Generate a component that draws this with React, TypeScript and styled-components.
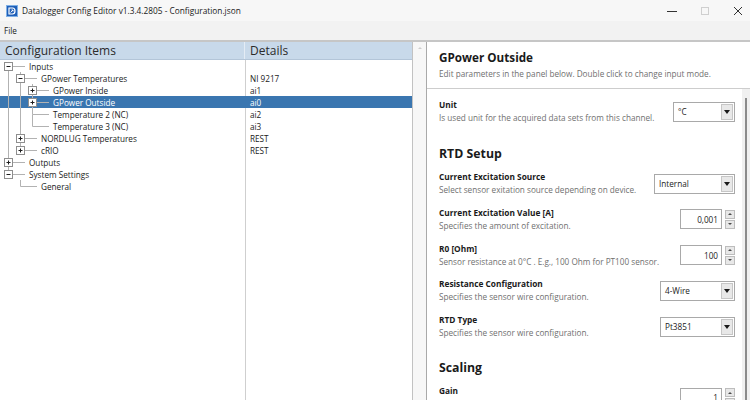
import React from "react";
import styled, { createGlobalStyle } from "styled-components";

const GlobalStyle = createGlobalStyle`
  html, body { margin: 0; padding: 0; width: 750px; height: 400px; overflow: hidden; background: #ffffff; }
  body { font-family: "Open Sans", "Noto Sans", sans-serif; font-size: 8.2px; color: #1b1b1b; }
  #root { width: 750px; height: 400px; }
`;

const Window = styled.div`
  width: 750px;
  height: 400px;
  display: flex;
  flex-direction: column;
  background: #f3f3f3;
  overflow: hidden;
`;

const TitleBar = styled.div`
  height: 21px;
  display: flex;
  align-items: center;
  padding-left: 6px;
  background: #f7f7f7;
`;

const TitleText = styled.span`
  font-size: 8.3px;
  color: #1a1a1a;
  margin-left: 4px;
`;

const WindowControls = styled.div`
  margin-left: auto;
  display: flex;
  gap: 9px;
  height: 100%;
`;

const ControlButton = styled.div`
  width: 24px;
  height: 100%;
  display: flex;
  align-items: center;
  justify-content: center;
`;

const MenuBar = styled.div`
  height: 19px;
  display: flex;
  align-items: center;
  padding-left: 4px;
  background: #f2f2f2;
`;

const MenuItem = styled.span`
  font-size: 8.2px;
  color: #1a1a1a;
`;

const Separator = styled.div`
  height: 2px;
  background: #c6c6c6;
`;

const Main = styled.div`
  flex: 1;
  display: flex;
  background: #ffffff;
  min-height: 0;
`;

const LeftPane = styled.div`
  width: 413px;
  box-sizing: border-box;
  border-right: 1px solid #c2c2c2;
  display: flex;
  flex-direction: column;
`;

const ListHeader = styled.div`
  height: 18px;
  box-sizing: border-box;
  display: flex;
  background: #c8d9ea;
  border-bottom: 1px solid #b3c5d8;
`;

const HeaderCell = styled.div<{ $width?: number }>`
  ${(p) => (p.$width ? `width: ${p.$width}px;` : "flex: 1;")}
  box-sizing: border-box;
  display: flex;
  align-items: center;
  padding-left: 5px;
  font-size: 12px;
  color: #2b2b2b;
  ${(p) => (p.$width ? "border-right: 1px solid #e4ecf5;" : "")}
`;

const TreeBody = styled.div`
  flex: 1;
  background: linear-gradient(
    to right,
    transparent 245px,
    #cfcfcf 245px,
    #cfcfcf 246px,
    transparent 246px
  );
`;

const TreeRow = styled.div<{ $selected?: boolean }>`
  height: 12px;
  display: flex;
  align-items: center;
  background: ${(p) => (p.$selected ? "#3a76b0" : "transparent")};
  color: ${(p) => (p.$selected ? "#ffffff" : "#1b1b1b")};
`;

const NameCell = styled.div`
  width: 245px;
  height: 100%;
  display: flex;
  align-items: center;
  white-space: nowrap;
`;

const NameLabel = styled.span`
  margin-left: 3px;
  font-size: 8.2px;
`;

const DetailCell = styled.div`
  flex: 1;
  padding-left: 5px;
  font-size: 8.2px;
  white-space: nowrap;
`;

const Gutter = styled.div`
  width: 13px;
  background: #f7f7f7;
  display: flex;
  justify-content: center;
  padding-top: 5px;
  box-sizing: border-box;
`;

const GutterCaret = styled.div`
  width: 0;
  height: 0;
  border-left: 2px solid transparent;
  border-right: 2px solid transparent;
  border-bottom: 2px solid #cdcdcd;
`;

const RightPane = styled.div`
  flex: 1;
  display: flex;
  flex-direction: column;
  border-left: 1px solid #a9a9a9;
  min-width: 0;
`;

const PanelHeader = styled.div`
  padding: 7px 12px 8px 12px;
  border-bottom: 1px solid #cdcdcd;
  background: #ffffff;
`;

const PanelTitle = styled.div`
  font-size: 11.7px;
  font-weight: 700;
  line-height: 16px;
  color: #1a1a1a;
`;

const PanelSubtitle = styled.div`
  margin-top: 3px;
  line-height: 12px;
  font-size: 8.2px;
  color: #6f6f6f;
  white-space: nowrap;
`;

const ContentArea = styled.div`
  flex: 1;
  display: flex;
  min-height: 0;
  overflow: hidden;
`;

const Form = styled.div`
  flex: 1;
  padding: 10px 7px 0 12px;
  overflow: hidden;
`;

const ScrollTrack = styled.div`
  width: 8px;
  background: #f0f0f0;
  display: flex;
  flex-direction: column;
  align-items: center;
  padding-top: 9px;
`;

const ScrollThumb = styled.div`
  width: 2px;
  flex: 1;
  background: #8b8b8b;
`;

const Section = styled.div<{ $gap: number }>`
  margin-top: ${(p) => p.$gap}px;
`;

const SectionHeading = styled.div`
  font-size: 12.3px;
  font-weight: 700;
  line-height: 18px;
  color: #1a1a1a;
  margin-bottom: 8px;
`;

const FieldRow = styled.div`
  height: 25px;
  display: flex;
  align-items: center;
  justify-content: space-between;
  & + & {
    margin-top: 10.75px;
  }
`;

const FieldText = styled.div`
  display: flex;
  flex-direction: column;
  white-space: nowrap;
`;

const FieldLabel = styled.div`
  font-size: 8.3px;
  font-weight: 700;
  line-height: 12px;
  color: #1a1a1a;
`;

const FieldDesc = styled.div`
  font-size: 8.2px;
  line-height: 12px;
  height: 12px;
  margin-top: 1px;
  color: #707070;
`;

const ComboBox = styled.div<{ $width: number }>`
  width: ${(p) => p.$width}px;
  height: 20px;
  box-sizing: border-box;
  border: 1px solid #a9a9a9;
  background: #ffffff;
  display: flex;
  align-items: stretch;
`;

const ComboValue = styled.div`
  flex: 1;
  display: flex;
  align-items: center;
  padding-left: 4px;
  font-size: 8.2px;
  color: #1b1b1b;
`;

const ComboButton = styled.div`
  width: 12px;
  margin: 1px;
  box-sizing: border-box;
  border: 1px solid #c6c6c6;
  background: #e8e8e8;
  display: flex;
  align-items: center;
  justify-content: center;
`;

const DownTriangle = styled.div`
  width: 0;
  height: 0;
  border-left: 3.5px solid transparent;
  border-right: 3.5px solid transparent;
  border-top: 4px solid #1a1a1a;
`;

const NumericGroup = styled.div`
  display: flex;
  align-items: center;
  gap: 3px;
`;

const NumericBox = styled.div`
  width: 42px;
  height: 20px;
  box-sizing: border-box;
  border: 1px solid #a9a9a9;
  background: #ffffff;
  display: flex;
  align-items: center;
  justify-content: flex-end;
  padding-right: 3px;
  font-size: 8.2px;
  color: #1b1b1b;
`;

const SpinColumn = styled.div`
  display: flex;
  flex-direction: column;
  gap: 1px;
`;

const SpinButton = styled.div`
  width: 10px;
  height: 9px;
  box-sizing: border-box;
  border: 1px solid #bdbdbd;
  background: #e8e8e8;
  display: flex;
  align-items: center;
  justify-content: center;
`;

const SpinArrow = styled.div<{ $up?: boolean }>`
  width: 0;
  height: 0;
  border-left: 2.5px solid transparent;
  border-right: 2.5px solid transparent;
  ${(p) =>
    p.$up
      ? "border-bottom: 2.5px solid #4a4a4a;"
      : "border-top: 2.5px solid #4a4a4a;"}
`;

type TreeItem = {
  label: string;
  level: number;
  expander: "plus" | "minus" | null;
  detail?: string;
  guides: boolean[];
  first?: boolean;
  last?: boolean;
  selected?: boolean;
};

const treeItems: TreeItem[] = [
  { label: "Inputs", level: 0, expander: "minus", guides: [], first: true },
  { label: "GPower Temperatures", level: 1, expander: "minus", detail: "NI 9217", guides: [true] },
  { label: "GPower Inside", level: 2, expander: "plus", detail: "ai1", guides: [true, true] },
  { label: "GPower Outside", level: 2, expander: "plus", detail: "ai0", guides: [true, true], selected: true },
  { label: "Temperature 2 (NC)", level: 2, expander: null, detail: "ai2", guides: [true, true] },
  { label: "Temperature 3 (NC)", level: 2, expander: null, detail: "ai3", guides: [true, true], last: true },
  { label: "NORDLUG Temperatures", level: 1, expander: "plus", detail: "REST", guides: [true] },
  { label: "cRIO", level: 1, expander: "plus", detail: "REST", guides: [true], last: true },
  { label: "Outputs", level: 0, expander: "plus", guides: [] },
  { label: "System Settings", level: 0, expander: "minus", guides: [], last: true },
  { label: "General", level: 1, expander: null, guides: [false], last: true },
];

const LINE = "#b2b2b2";

function TreeGlyph({ item }: { item: TreeItem }) {
  const w = 26 + 12 * item.level;
  const cx = 8.5 + 12 * item.level;
  return (
    <svg width={w} height={12} viewBox={`0 0 ${w} 12`} style={{ flex: "none" }}>
      {item.guides.map((g, i) =>
        g ? <line key={i} x1={8.5 + 12 * i} y1={0} x2={8.5 + 12 * i} y2={12} stroke={LINE} strokeWidth={1} /> : null
      )}
      {!item.first && <line x1={cx} y1={0} x2={cx} y2={6.5} stroke={LINE} strokeWidth={1} />}
      {!item.last && <line x1={cx} y1={6.5} x2={cx} y2={12} stroke={LINE} strokeWidth={1} />}
      <line x1={cx} y1={6.5} x2={w - 1} y2={6.5} stroke={LINE} strokeWidth={1} />
      {item.expander && (
        <g>
          <rect x={cx - 4} y={2.5} width={8} height={8} fill="#ffffff" stroke="#8e8e8e" strokeWidth={1} />
          <line x1={cx - 2} y1={6.5} x2={cx + 2} y2={6.5} stroke="#1e1e1e" strokeWidth={1} />
          {item.expander === "plus" && (
            <line x1={cx} y1={4.5} x2={cx} y2={8.5} stroke="#1e1e1e" strokeWidth={1} />
          )}
        </g>
      )}
    </svg>
  );
}

function AppIcon() {
  return (
    <svg width={12} height={12} viewBox="0 0 12 12">
      <rect x={0} y={0} width={12} height={12} fill="#7fb0e6" />
      <rect x={1} y={1} width={10} height={10} fill="#1f5fb8" />
      <path d="M3 3 H6.5 Q9 3 9 6 Q9 9 6.5 9 H3 Z" fill="none" stroke="#ffffff" strokeWidth={1.2} />
      <path d="M4.5 7.5 L7 5 M5.5 5 H7 V6.5" fill="none" stroke="#ffffff" strokeWidth={0.9} />
    </svg>
  );
}

function Combo({ value, width }: { value: string; width: number }) {
  return (
    <ComboBox $width={width}>
      <ComboValue>{value}</ComboValue>
      <ComboButton>
        <DownTriangle />
      </ComboButton>
    </ComboBox>
  );
}

function Numeric({ value }: { value: string }) {
  return (
    <NumericGroup>
      <NumericBox>{value}</NumericBox>
      <SpinColumn>
        <SpinButton>
          <SpinArrow $up />
        </SpinButton>
        <SpinButton>
          <SpinArrow />
        </SpinButton>
      </SpinColumn>
    </NumericGroup>
  );
}

function Field({ label, desc, control }: { label: string; desc?: string; control: React.ReactNode }) {
  return (
    <FieldRow>
      <FieldText>
        <FieldLabel>{label}</FieldLabel>
        <FieldDesc>{desc}</FieldDesc>
      </FieldText>
      {control}
    </FieldRow>
  );
}

export default function App() {
  return (
    <>
      <GlobalStyle />
      <Window>
        <TitleBar>
          <AppIcon />
          <TitleText>Datalogger Config Editor v1.3.4.2805 - Configuration.json</TitleText>
          <WindowControls>
            <ControlButton>
              <svg width={10} height={10} viewBox="0 0 10 10">
                <line x1={0} y1={5.5} x2={10} y2={5.5} stroke="#333" strokeWidth={1} />
              </svg>
            </ControlButton>
            <ControlButton>
              <svg width={10} height={10} viewBox="0 0 10 10">
                <rect x={1.5} y={1.5} width={7} height={7} fill="none" stroke="#cfcfcf" strokeWidth={1} />
              </svg>
            </ControlButton>
            <ControlButton>
              <svg width={10} height={10} viewBox="0 0 10 10">
                <path d="M1 1 L9 9 M9 1 L1 9" stroke="#333" strokeWidth={1} />
              </svg>
            </ControlButton>
          </WindowControls>
        </TitleBar>
        <MenuBar>
          <MenuItem>File</MenuItem>
        </MenuBar>
        <Separator />
        <Main>
          <LeftPane>
            <ListHeader>
              <HeaderCell $width={245}>Configuration Items</HeaderCell>
              <HeaderCell>Details</HeaderCell>
            </ListHeader>
            <TreeBody>
              {treeItems.map((item) => (
                <TreeRow key={item.label} $selected={item.selected}>
                  <NameCell>
                    <TreeGlyph item={item} />
                    <NameLabel>{item.label}</NameLabel>
                  </NameCell>
                  <DetailCell>{item.detail ?? ""}</DetailCell>
                </TreeRow>
              ))}
            </TreeBody>
          </LeftPane>
          <Gutter>
            <GutterCaret />
          </Gutter>
          <RightPane>
            <PanelHeader>
              <PanelTitle>GPower Outside</PanelTitle>
              <PanelSubtitle>
                Edit parameters in the panel below. Double click to change input mode.
              </PanelSubtitle>
            </PanelHeader>
            <ContentArea>
              <Form>
                <Field
                  label="Unit"
                  desc="Is used unit for the acquired data sets from this channel."
                  control={<Combo value="°C" width={62} />}
                />
                <Section $gap={21}>
                  <SectionHeading>RTD Setup</SectionHeading>
                  <Field
                    label="Current Excitation Source"
                    desc="Select sensor exitation source depending on device."
                    control={<Combo value="Internal" width={81} />}
                  />
                  <Field
                    label="Current Excitation Value [A]"
                    desc="Specifies the amount of excitation."
                    control={<Numeric value="0,001" />}
                  />
                  <Field
                    label="R0 [Ohm]"
                    desc="Sensor resistance at 0°C . E.g., 100 Ohm for PT100 sensor."
                    control={<Numeric value="100" />}
                  />
                  <Field
                    label="Resistance Configuration"
                    desc="Specifies the sensor wire configuration."
                    control={<Combo value="4-Wire" width={75} />}
                  />
                  <Field
                    label="RTD Type"
                    desc="Specifies the sensor wire configuration."
                    control={<Combo value="Pt3851" width={75} />}
                  />
                </Section>
                <Section $gap={20}>
                  <SectionHeading>Scaling</SectionHeading>
                  <Field label="Gain" control={<Numeric value="1" />} />
                </Section>
              </Form>
              <ScrollTrack>
                <ScrollThumb />
              </ScrollTrack>
            </ContentArea>
          </RightPane>
        </Main>
      </Window>
    </>
  );
}
